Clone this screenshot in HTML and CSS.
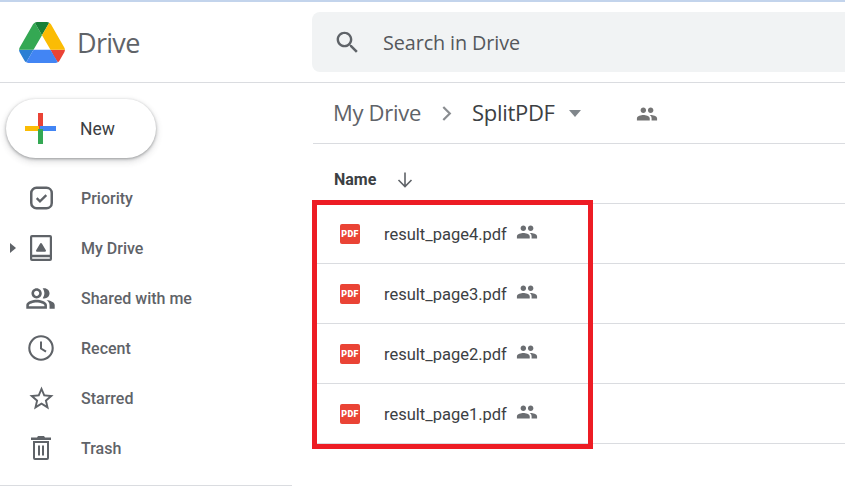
FILE: index.html
```html
<!DOCTYPE html>
<html lang="en">
<head>
<meta charset="utf-8">
<title>SplitPDF - Google Drive</title>
<link rel="stylesheet" href="styles.css">
</head>
<body>
<svg class="sprite" width="0" height="0" aria-hidden="true">
  <symbol id="people" viewBox="0 0 24 24"><path d="M16 11c1.66 0 2.99-1.34 2.99-3S17.66 5 16 5c-1.66 0-3 1.34-3 3s1.34 3 3 3zm-8 0c1.66 0 2.99-1.34 2.99-3S9.66 5 8 5C6.34 5 5 6.34 5 8s1.34 3 3 3zm0 2c-2.33 0-7 1.17-7 3.5V19h14v-2.5c0-2.33-4.67-3.5-7-3.5zm8 0c-.29 0-.62.02-.97.05 1.16.84 1.97 1.97 1.97 3.45V19h6v-2.5c0-2.33-4.67-3.5-7-3.5z"/></symbol>
</svg>
<div class="topline"></div>
<header class="header">
  <div class="brand">
    <svg class="logo" viewBox="0 0 87.3 78" aria-hidden="true">
      <path d="m6.6 66.85 3.85 6.65c.8 1.4 1.95 2.5 3.3 3.3l13.75-23.8h-27.5c0 1.55.4 3.1 1.2 4.5z" fill="#2b7fd4"/>
      <path d="m43.65 25-13.75-23.8c-1.35.8-2.5 1.9-3.3 3.3l-25.4 44a9.06 9.06 0 0 0 -1.2 4.5h27.5z" fill="#34a853"/>
      <path d="m73.55 76.8c1.35-.8 2.5-1.9 3.3-3.3l1.6-2.75 7.65-13.25c.8-1.4 1.2-2.95 1.2-4.5h-27.502l5.852 11.5z" fill="#ea4335"/>
      <path d="m43.65 25 13.75-23.8c-1.35-.8-2.9-1.2-4.5-1.2h-18.5c-1.6 0-3.15.45-4.5 1.2z" fill="#188038"/>
      <path d="m59.8 53h-32.3l-13.75 23.8c1.35.8 2.9 1.2 4.5 1.2h50.8c1.6 0 3.15-.45 4.5-1.2z" fill="#4285f4"/>
      <path d="m73.4 26.5-12.7-22c-.8-1.4-1.95-2.5-3.3-3.3l-13.75 23.8 16.15 28h27.45c0-1.55-.4-3.1-1.2-4.5z" fill="#fbbc04"/>
    </svg>
    <span class="brand-name">Drive</span>
  </div>
  <div class="search">
    <svg class="search-icon" viewBox="0 0 24 24" aria-hidden="true"><path d="M15.5 14h-.79l-.28-.27C15.41 12.59 16 11.11 16 9.5 16 5.91 13.09 3 9.5 3S3 5.91 3 9.5 5.91 16 9.5 16c1.61 0 3.09-.59 4.23-1.57l.27.28v.79l5 4.99L20.49 19l-4.99-5zm-6 0C7.01 14 5 11.99 5 9.5S7.01 5 9.5 5 14 7.01 14 9.5 11.99 14 9.5 14z"/></svg>
    <span class="search-text">Search in Drive</span>
  </div>
</header>
<div class="body">
  <aside class="sidebar">
    <button class="new-btn" type="button">
      <svg class="plus" viewBox="0 0 32 32" aria-hidden="true">
        <rect x="13" y="0" width="5" height="16" fill="#ea4335"/>
        <rect x="0" y="13" width="14" height="5" fill="#fbbc04"/>
        <rect x="15" y="13" width="16" height="5" fill="#4285f4"/>
        <rect x="13" y="16" width="5" height="15" fill="#34a853"/>
      </svg>
      <span>New</span>
    </button>
    <nav class="nav">
      <div class="nav-item">
        <span class="nav-icon"><svg class="ic-priority" viewBox="0 0 24 24" aria-hidden="true"><rect x="1.300" y="1.300" width="21.400" height="21.400" rx="5.500" fill="none" stroke="#5f6368" stroke-width="2.600"/><path d="M7 12.200l3.400 3.300L17 9" fill="none" stroke="#5f6368" stroke-width="2.400"/></svg></span>
        <span>Priority</span>
      </div>
      <div class="nav-item">
        <span class="expander"></span>
        <span class="nav-icon"><svg class="ic-drive" viewBox="0 0 22 26" aria-hidden="true"><path fill-rule="evenodd" d="M2 0h18a2 2 0 0 1 2 2v22a2 2 0 0 1-2 2H2a2 2 0 0 1-2-2V2a2 2 0 0 1 2-2zm.2 2.200v17.600h17.600V2.200H2.200zm0 20v1.600h17.600v-1.600H2.200z"/><path d="M11 9l4 6.700H7z" stroke="#5f6368" stroke-width="2" stroke-linejoin="round"/></svg></span>
        <span>My Drive</span>
      </div>
      <div class="nav-item">
        <span class="nav-icon"><svg class="ic-shared" viewBox="0 0 24 24" aria-hidden="true"><path d="M16.67 13.13C18.04 14.06 19 15.32 19 17v3h4v-3c0-2.180-3.570-3.470-6.330-3.870z"/><path d="M15 12c2.210 0 4-1.790 4-4s-1.790-4-4-4c-.47 0-.91.1-1.330.24C14.500 5.270 15 6.580 15 8s-.5 2.730-1.330 3.760c.42.14.86.24 1.330.24z"/><path d="M9 12c2.210 0 4-1.790 4-4s-1.790-4-4-4-4 1.790-4 4 1.790 4 4 4zm0-6c1.100 0 2 .9 2 2s-.9 2-2 2-2-.9-2-2 .9-2 2-2z"/><path d="M9 13c-2.670 0-8 1.340-8 4v3h16v-3c0-2.660-5.330-4-8-4zm6 5H3v-.99C3.200 16.290 6.300 15 9 15s5.800 1.290 6 2z"/></svg></span>
        <span>Shared with me</span>
      </div>
      <div class="nav-item">
        <span class="nav-icon"><svg class="ic-recent" viewBox="0 0 26 26" aria-hidden="true"><circle cx="13" cy="13" r="11.700" fill="none" stroke="#5f6368" stroke-width="2.100"/><path d="M13 6.500V13.500l5 3.200" fill="none" stroke="#5f6368" stroke-width="2"/></svg></span>
        <span>Recent</span>
      </div>
      <div class="nav-item">
        <span class="nav-icon"><svg class="ic-star" viewBox="0 0 24 24" aria-hidden="true"><path d="M22 9.240l-7.190-.62L12 2 9.190 8.630 2 9.240l5.460 4.730L5.820 21 12 17.270 18.180 21l-1.630-7.030L22 9.240zM12 15.400l-3.760 2.270 1-4.280-3.320-2.880 4.380-.38L12 6.100l1.710 4.040 4.380.38-3.320 2.880 1 4.280L12 15.400z"/></svg></span>
        <span>Starred</span>
      </div>
      <div class="nav-item">
        <span class="nav-icon"><svg class="ic-trash" viewBox="0 0 20 24" aria-hidden="true"><path d="M7 0h6l1 1.500h6v2.500H0V1.500h6L7 0z"/><path fill-rule="evenodd" d="M2 5h16v17a2 2 0 0 1-2 2H4a2 2 0 0 1-2-2V5zm2 2v15h12V7H4z"/><rect x="7" y="9.500" width="2" height="10"/><rect x="11" y="9.500" width="2" height="10"/></svg></span>
        <span>Trash</span>
      </div>
    </nav>
    <div class="side-rule"></div>
  </aside>
  <main class="main">
    <div class="crumbs">
      <span class="crumb">My Drive</span>
      <svg class="crumb-sep" viewBox="0 0 10 15" aria-hidden="true"><path d="M1.300 1l6.500 6.500-6.500 6.500" fill="none" stroke="#8a8d91" stroke-width="2.200"/></svg>
      <span class="crumb current">SplitPDF</span>
      <span class="caret"></span>
      <svg class="crumb-people"><use href="#people"/></svg>
    </div>
    <div class="col-head">
      <span class="col-name">Name</span>
      <svg class="sort" viewBox="0 0 16 16" aria-hidden="true"><path d="M8 .5v14M1.500 8L8 14.500 14.500 8" fill="none" stroke="#5f6368" stroke-width="1.600"/></svg>
    </div>
    <div class="files">
      <div class="file"><span class="pdf">PDF</span><span class="fname">result_page4.pdf</span><svg class="file-people"><use href="#people"/></svg></div>
      <div class="file"><span class="pdf">PDF</span><span class="fname">result_page3.pdf</span><svg class="file-people"><use href="#people"/></svg></div>
      <div class="file"><span class="pdf">PDF</span><span class="fname">result_page2.pdf</span><svg class="file-people"><use href="#people"/></svg></div>
      <div class="file"><span class="pdf">PDF</span><span class="fname">result_page1.pdf</span><svg class="file-people"><use href="#people"/></svg></div>
      <div class="highlight"></div>
    </div>
  </main>
</div>
</body>
</html>
```

FILE: styles.css
```css
* { box-sizing: border-box; }
html, body { height: 100%; }
body {
  margin: 0;
  overflow: hidden;
  background: #fff;
  font-family: Roboto, "Liberation Sans", sans-serif;
  color: #5f6368;
}
.sprite { position: absolute; }
svg { display: block; fill: #5f6368; flex: none; }

.topline { height: 2px; background: #c3d4ec; }

.header {
  height: 81px;
  display: flex;
  padding-top: 10px;
  border-bottom: 1px solid #dadce0;
}
.brand {
  width: 312px;
  height: 60px;
  padding-left: 19px;
  display: flex;
  align-items: center;
  gap: 12px;
}
.logo { width: 46px; height: 41px; }
.brand-name { font-family: "Open Sans", sans-serif; font-size: 27px; letter-spacing: -.7px; color: #5f6368; }
.search {
  flex: 1;
  height: 60px;
  display: flex;
  align-items: center;
  padding-left: 21px;
  background: #f1f3f4;
  border-radius: 8px 0 0 8px;
}
.search-icon { width: 29px; height: 29px; fill: #5f6368; }
.search-text { margin-left: 21px; font-family: "Open Sans", sans-serif; font-size: 19.800px; letter-spacing: -.1px; color: #55585c; }

.body { display: flex; }
.sidebar { width: 292px; flex: none; padding-top: 16px; }
.new-btn {
  display: flex;
  align-items: center;
  width: 150px;
  height: 59px;
  margin-left: 6px;
  padding: 0 0 0 19px;
  border: 0;
  border-radius: 30px;
  background: #fff;
  box-shadow: 0 1px 3px rgba(60,64,67,.45), 0 3px 6px 1px rgba(60,64,67,.16);
  font: 400 17.500px Roboto, sans-serif;
  color: #3c4043;
}
.plus { width: 32px; height: 32px; margin-right: 23px; }

.nav { margin-top: 15px; }
.nav-item {
  position: relative;
  height: 50px;
  display: flex;
  align-items: center;
  font-size: 16px;
  font-weight: 500;
  color: #5f6368;
}
.nav-icon { width: 81px; display: flex; justify-content: flex-start; flex: none; }
.ic-priority { width: 23px; height: 24px; margin-left: 30px; }
.ic-drive { width: 22px; height: 26px; margin-left: 30px; }
.ic-shared { width: 31px; height: 31px; margin-left: 25px; }
.ic-recent { width: 26px; height: 26px; margin-left: 28px; }
.ic-star { width: 29px; height: 29px; margin-left: 27px; }
.ic-trash { width: 20px; height: 24px; margin-left: 31px; }
.expander {
  position: absolute;
  left: 10px;
  top: 20px;
  border-left: 6px solid #5f6368;
  border-top: 5px solid transparent;
  border-bottom: 5px solid transparent;
}
.side-rule { height: 1px; margin-top: 12px; background: #dadce0; }

.main { flex: 1; min-width: 0; padding-left: 21px; }
.crumbs {
  height: 61px;
  display: flex;
  align-items: center;
  padding-left: 20px;
  padding-bottom: 2px;
  border-bottom: 1px solid #dadce0;
}
.crumb { font-family: "Open Sans", sans-serif; font-size: 22px; letter-spacing: -.3px; color: #5f6368; }
.crumb.current { color: #3c4043; }
.crumb-sep { width: 10px; height: 15px; margin: 2px 20px 0 21px; }
.caret {
  margin: 3px 0 0 14px;
  border-top: 7px solid #80868b;
  border-left: 6.500px solid transparent;
  border-right: 6.500px solid transparent;
}
.crumb-people { width: 22px; height: 22px; margin: 4px 0 0 55px; fill: #757575; }

.col-head {
  height: 60px;
  display: flex;
  align-items: center;
  padding: 12px 0 0 21px;
  border-bottom: 1px solid #dadce0;
}
.col-name { font-size: 16px; font-weight: 700; color: #3c4043; }
.sort { width: 16px; height: 16px; margin-left: 21px; }

.files { position: relative; }
.file {
  height: 60px;
  display: flex;
  align-items: center;
  padding-left: 27px;
  border-bottom: 1px solid #dadce0;
}
.pdf {
  width: 20px;
  height: 20px;
  display: flex;
  align-items: center;
  justify-content: center;
  border-radius: 2px;
  background: #ea4335;
  color: #fff;
  font-size: 9px;
  font-weight: 900;
  letter-spacing: .3px;
}
.fname { margin: 2px 0 0 24px; font-size: 16.500px; color: #3c4043; }
.file-people { width: 22px; height: 22px; margin: -4px 0 0 9px; fill: #6b6e72; }
.highlight {
  position: absolute;
  left: -1px;
  top: -4px;
  width: 281px;
  height: 249px;
  border: 5px solid #ed1c24;
}
```
